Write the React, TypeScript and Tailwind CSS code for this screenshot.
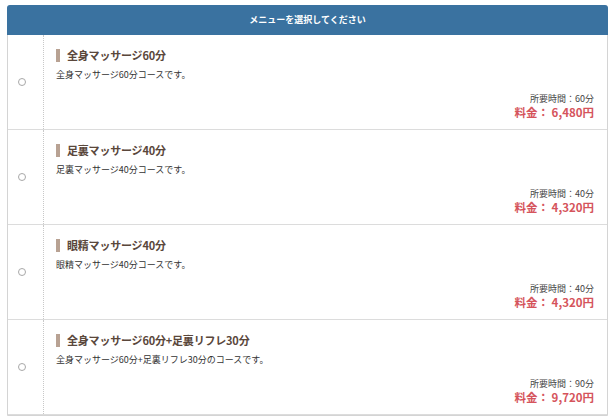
import React from "react";

const items = [
  { title: "全身マッサージ60分", desc: "全身マッサージ60分コースです。", time: "60分", price: "6,480円" },
  { title: "足裏マッサージ40分", desc: "足裏マッサージ40分コースです。", time: "40分", price: "4,320円" },
  { title: "眼精マッサージ40分", desc: "眼精マッサージ40分コースです。", time: "40分", price: "4,320円" },
  { title: "全身マッサージ60分+足裏リフレ30分", desc: "全身マッサージ60分+足裏リフレ30分のコースです。", time: "90分", price: "9,720円" },
];

export default function App() {
  return (
    <div className="w-[615px] h-[416px] overflow-hidden bg-white pt-[5px] pl-[7px]" style={{ fontFamily: '"Noto Sans CJK JP", "Noto Sans", sans-serif' }}>
      <div className="w-[601px] border border-[#d4d4d4] rounded-t-[4px]">
        <div className="h-[30px] bg-[#3a72a0] rounded-t-[3px] flex items-center justify-center text-white text-[9px] font-bold -mx-px -mt-px">
          メニューを選択してください
        </div>
        {items.map((it, i) => (
          <div key={i} className="flex h-[95px] border-b border-[#dcdcdc]">
            <div className="w-[35px] flex items-center pl-[10px]">
              <div className="w-[8px] h-[8px] rounded-full border border-[#a8a8a8] bg-white" />
            </div>
            <div className="flex-1 border-l border-dotted border-[#c8c8c8] pl-[12px] pr-[13px] pt-[13px] pb-[9px] flex flex-col">
              <div className="flex items-center h-[14px]">
                <div className="w-[4px] h-[13px] bg-[#b8a293] mr-[7px]" />
                <span className="text-[11px] font-bold text-[#5a473b] leading-none tracking-[-0.2px]">{it.title}</span>
              </div>
              <div className="mt-[7px] text-[9px] text-[#333] leading-[12px]">{it.desc}</div>
              <div className="mt-auto flex flex-col items-end">
                <div className="text-[9px] text-[#444] leading-[13px]">所要時間：{it.time}</div>
                <div className="text-[11.5px] font-bold text-[#d5545c] leading-[15px]">料金： {it.price}</div>
              </div>
            </div>
          </div>
        ))}
      </div>
    </div>
  );
}
